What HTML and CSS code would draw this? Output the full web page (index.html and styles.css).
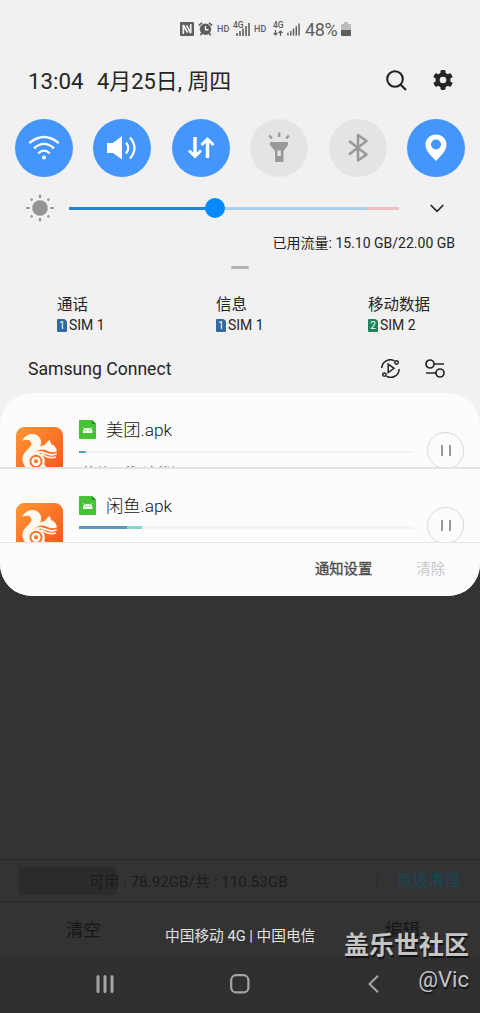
FILE: index.html
```html
<!DOCTYPE html>
<html lang="zh-CN">
<head>
<meta charset="utf-8">
<title>通知面板</title>
<link rel="stylesheet" href="styles.css">
</head>
<body>
<svg class="defs" width="0" height="0">
  <defs>
    <linearGradient id="orange" x1="0" y1="0" x2="1" y2="1"><stop offset="0" stop-color="#ff9636"/><stop offset="1" stop-color="#fc5418"/></linearGradient>
    <symbol id="uc" viewBox="48 110 141 141">
      <rect x="48" y="110" width="141" height="141" rx="25" fill="url(#orange)"/>
      <path fill="#fff8ee" d="M67 151C75 133 96 126 110 134C126 143 127 160 117 174C109 185 96 190 91 202C86 216 91 230 104 236L82 236C70 224 64 209 69 196C74 182 91 174 94 162C96 150 83 144 67 151Z"/>
      <path fill="#fff8ee" d="M149 148L154 162C164 165 170 174 171 183C162 188 148 186 138 180C127 174 114 178 101 187C109 174 122 165 134 164C138 158 143 153 149 148Z"/>
      <path fill="none" stroke="#fff8ee" stroke-width="5" d="M102 190C122 178 134 190 150 193Q162 195 170 190M124 190C136 199 153 205 168 200"/>
      <circle cx="108" cy="213" r="23" fill="#fb702a" stroke="#fff8ee" stroke-width="7"/>
      <circle cx="108" cy="213" r="10" fill="none" stroke="#fff8ee" stroke-width="8"/>
      <path stroke="#fff8ee" stroke-width="7" d="M128 222L139 236"/>
    </symbol>
    <symbol id="apk" viewBox="0 0 17 19">
      <path fill="#45c236" d="M1 0H13L17 4V18Q17 19 16 19H1Q0 19 0 18V1Q0 0 1 0Z"/><path fill="#238a29" d="M13 0L17 4H13Z"/>
      <path fill="#f4fff0" d="M4 13V11Q4.5 8 8.7 8T13.4 11V13Z"/><path stroke="#f4fff0" stroke-width=".8" d="M4 7L6 9.3M13.4 7L11.4 9.3"/><path stroke="#45b53a" stroke-width="1.2" d="M6.3 10.5H7.5M10 10.5H11.2"/>
    </symbol>
    <symbol id="signal" viewBox="0 0 14 13"><path stroke="#5e5e5e" stroke-width="1.6" d="M1 10V13M4 8V13M7 5.5V13M10 3V13M13 0V13"/></symbol>
  </defs>
</svg>
<main class="screen">
  <section class="panel">
    <header class="status">
      <svg width="14" height="14" viewBox="0 0 14 14"><rect width="14" height="14" rx="1" fill="#5e5e5e"/><path fill="none" stroke="#f1f1f1" stroke-width="1.7" d="M3.3 12V3L7.5 10.7M6.5 3.3L10.7 11V2"/></svg>
      <svg class="alarm" width="15" height="14" viewBox="0 0 15 14"><circle cx="7.5" cy="7.3" r="5.7" fill="#5e5e5e"/><path fill="none" stroke="#5e5e5e" stroke-width="1.7" d="M.8 3.3L4 .8M14.2 3.3L11 .8M4 11L2.3 13.3M11 11L12.7 13.3"/><path fill="none" stroke="#f1f1f1" stroke-width="1.4" d="M7.5 4V7.8H10.5"/></svg>
      <span class="hd">HD</span>
      <span class="network net-one"><b>4G</b><svg width="14" height="13"><use href="#signal"/></svg></span>
      <span class="hd">HD</span>
      <span class="network net-two"><b>4G</b><svg class="arrows" width="10" height="6" viewBox="0 0 10 6"><path fill="none" stroke="#5e5e5e" stroke-width="1.2" d="M2.5 0V5M.6 3L2.5 5L4.4 3M7.5 6V1M5.6 3L7.5 1L9.4 3"/></svg><svg width="13" height="13"><use href="#signal"/></svg></span>
      <span class="percent">48%</span>
      <svg class="battery" width="10" height="14" viewBox="0 0 10 14"><path fill="#bcbcbc" d="M3 0H7V2H9Q10 2 10 3V8H0V3Q0 2 1 2H3Z"/><path fill="#5e5e5e" d="M0 8H10V13Q10 14 9 14H1Q0 14 0 13Z"/></svg>
    </header>

    <div class="clock-row">
      <span class="time">13:04</span><span class="date">4月25日, 周四</span>
      <svg class="search" width="21" height="21" viewBox="0 0 21 21"><circle cx="9" cy="9" r="7.8" fill="none" stroke="#222" stroke-width="2.1"/><path stroke="#222" stroke-width="2.2" d="M14.5 14.5L20 20"/></svg>
      <svg class="gear" width="20" height="20" viewBox="0 0 20 20"><g fill="#252525"><circle cx="10" cy="10" r="7.5"/><rect x="7.5" y="0" width="5" height="20" rx="1.4"/><rect x="7.5" y="0" width="5" height="20" rx="1.4" transform="rotate(60 10 10)"/><rect x="7.5" y="0" width="5" height="20" rx="1.4" transform="rotate(120 10 10)"/></g><circle cx="10" cy="10" r="3.3" fill="#f1f1f1"/></svg>
    </div>

    <nav class="toggles">
      <span class="toggle on"><svg viewBox="0 0 58 58"><g fill="none" stroke="#fff" stroke-width="2.3"><path d="M14.3 24Q29 12 43.7 24M19 29.3Q29 20.5 39 29.3M23.3 34.3Q29 29 34.7 34.3"/></g><circle cx="29" cy="38.5" r="2" fill="#fff"/></svg></span>
      <span class="toggle on"><svg viewBox="0 0 58 58"><path fill="#fff" d="M14 24H20L29 17V40.5L20 34H14Z"/><path fill="none" stroke="#fff" stroke-width="2.2" d="M33 23.5Q37.5 29 33 34.5M37 18.5Q46 29 37 39.5"/></svg></span>
      <span class="toggle on"><svg viewBox="0 0 58 58"><path fill="none" stroke="#fff" stroke-width="3.5" d="M23 18V37M35.5 39V21"/><path fill="none" stroke="#fff" stroke-width="3" d="M17 31.5L23 37.5L29 31.5M29.5 26L35.5 20L41.5 26"/></svg></span>
      <span class="toggle"><svg viewBox="0 0 58 58"><path fill="#999" fill-rule="evenodd" d="M20 23H38V26L33.5 32V42Q33.5 43 32.5 43H26Q25 43 25 42V32L20 26ZM27.5 31.5V37H30.8V31.5Z"/><path stroke="#999" stroke-width="2.3" d="M19.2 16.5L22 19.5M29.2 13.5V18M39 16.5L36 19.5"/></svg></span>
      <span class="toggle"><svg viewBox="0 0 58 58"><path fill="none" stroke="#999" stroke-width="2.5" stroke-linejoin="round" d="M20 22L37.5 35.5L29 41.5V16L37.5 22L20 35.5"/></svg></span>
      <span class="toggle on"><svg viewBox="0 0 58 58"><path fill="#fff" fill-rule="evenodd" d="M29 15.5C22.8 15.5 18.5 20 18.5 25.5C18.5 32 24 36.5 29 42C34 36.5 39.5 32 39.5 25.5C39.5 20 35.2 15.5 29 15.5ZM29 20.5A5 5 0 1 0 29 30.5A5 5 0 1 0 29 20.5Z"/></svg></span>
    </nav>

    <div class="brightness">
      <svg width="28" height="28" viewBox="0 0 28 28"><circle cx="14" cy="14" r="7.8" fill="#949494"/><path stroke="#999" stroke-width="2.2" d="M14 .5V4M14 24V27.5M.3 14H3.8M24.2 14H27.7M4.8 4.8L6.5 6.5M21.5 21.5L23.2 23.2M4.8 23.2L6.5 21.5M21.5 6.5L23.2 4.8"/></svg>
      <div class="slider"><i class="level"></i><i class="rest"></i><i class="hot"></i><b class="thumb"></b></div>
      <svg class="chevron" width="14" height="9" viewBox="0 0 14 9"><path fill="none" stroke="#252525" stroke-width="1.7" d="M.7 1L7 7.3L13.3 1"/></svg>
    </div>
    <div class="usage">已用流量: 15.10 GB/22.00 GB</div>
    <div class="handle"></div>

    <div class="sims">
      <div class="sim"><span>通话</span><small><i>1</i>SIM 1</small></div>
      <div class="sim"><span>信息</span><small><i>1</i>SIM 1</small></div>
      <div class="sim"><span>移动数据</span><small><i class="green">2</i>SIM 2</small></div>
    </div>

    <div class="connect">
      <span>Samsung Connect</span>
      <svg class="media" width="19" height="19" viewBox="0 0 19 19"><g fill="none" stroke="#252525" stroke-width="1.5"><path d="M.8 9A8.6 8.6 0 0 1 13.5 1.8M18.2 10A8.6 8.6 0 0 1 5.3 17.2M7.2 5.2L13 9.3L7.2 13.5Z"/><circle cx="15.5" cy="3.5" r="1.7"/><circle cx="3.4" cy="15.6" r="1.7"/></g></svg>
      <svg width="20" height="19" viewBox="0 0 20 19"><g fill="none" stroke="#252525" stroke-width="1.7"><circle cx="5" cy="5" r="4"/><path d="M9 5H19M1 14H11"/><circle cx="15" cy="14" r="4"/></g></svg>
    </div>

    <section class="card">
      <article class="download first">
        <svg class="app" width="47" height="47"><use href="#uc"/></svg>
        <div class="info">
          <div class="name"><svg width="17" height="19"><use href="#apk"/></svg><span>美团.apk</span></div>
          <div class="progress"><i style="width:6px"></i><b style="width:2px"></b></div>
          <div class="detail">等待下载, 请稍候...</div>
        </div>
        <span class="pause"></span>
      </article>
      <article class="download">
        <svg class="app" width="47" height="47"><use href="#uc"/></svg>
        <div class="info">
          <div class="name"><svg width="17" height="19"><use href="#apk"/></svg><span>闲鱼.apk</span></div>
          <div class="progress"><i style="width:48px"></i><b style="width:15px"></b></div>
        </div>
        <span class="pause"></span>
      </article>
      <footer class="actions"><span>通知设置</span><span class="clear">清除</span></footer>
    </section>
  </section>

  <section class="storage"><span class="used"></span><span class="space">可用 : 78.92GB/共 : 110.53GB</span><span class="clean">垃圾清理</span></section>
  <section class="bottom"><span class="empty">清空</span><span class="carrier">中国移动 4G | 中国电信</span><span class="edit">编辑</span></section>
  <nav class="navigation">
    <svg width="18" height="18" viewBox="0 0 18 18"><path stroke="#a5a5a5" stroke-width="3" stroke-linecap="round" d="M2 1.5V16.5M9 1.5V16.5M16 1.5V16.5"/></svg>
    <svg width="20" height="20" viewBox="0 0 20 20"><rect x="1.2" y="1.2" width="17.2" height="17.2" rx="5" fill="none" stroke="#a5a5a5" stroke-width="2.2"/></svg>
    <svg width="11" height="18" viewBox="0 0 11 18"><path fill="none" stroke="#a5a5a5" stroke-width="2" d="M10 .7L1.5 9L10 17.3"/></svg>
  </nav>
  <div class="watermark"><strong>盖乐世社区</strong><span>@Vic</span></div>
</main>
</body>
</html>
```
FILE: styles.css
```css
* { box-sizing: border-box; }
body { margin: 0; font-family: Roboto, "Noto Sans CJK SC", sans-serif; color: #252525; }
i, b { font-style: normal; display: block; }
svg { display: block; flex: none; }
span, small { white-space: nowrap; }
.defs { position: absolute; }
.screen { position: relative; width: 480px; height: 1013px; overflow: hidden; background: #333; display: flex; flex-direction: column; }
.panel { height: 596px; flex: none; background: #f1f1f1; border-radius: 0 0 32px 32px; display: flex; flex-direction: column; }
.status { height: 58px; padding-left: 180px; display: flex; align-items: center; color: #5e5e5e; }
.alarm { margin-left: 4px; }
.hd { font-size: 9px; font-weight: 500; margin-left: 4px; width: 12px; }
.network { position: relative; width: 17px; height: 14px; margin-left: 4px; display: flex; align-items: flex-end; justify-content: flex-end; }
.network b { position: absolute; left: 0; top: -1px; font-size: 8.5px; line-height: 9px; font-weight: 500; }
.network.net-two { width: 27px; margin-left: 7px; }
.arrows { position: absolute; left: 0; bottom: 0; }
.percent { font-size: 18px; margin-left: 5px; width: 33px; letter-spacing: -.4px; }
.battery { margin-left: 3px; }
.clock-row { height: 46px; padding: 0 27px 0 28px; display: flex; align-items: center; font-size: 22.3px; }
.time { width: 69px; }
.date { font-size: 21.9px; line-height: 30px; padding-top: 1px; }
.search { margin-left: auto; margin-top: -2px; }
.gear { margin-left: 26px; margin-top: -2px; }
.toggles { margin-top: 15px; height: 58px; padding: 0 15px; display: flex; justify-content: space-between; }
.toggle { width: 58px; height: 58px; border-radius: 50%; background: #e4e4e4; }
.toggle.on { background: #4496fc; }
.brightness { height: 62px; padding: 0 36px 0 26px; display: flex; align-items: center; }
.slider { position: relative; width: 330px; height: 3px; margin-left: 15px; display: flex; }
.level { width: 146px; background: #2585d2; }
.rest { width: 152px; background: #a9cfee; }
.hot { width: 32px; background: #efbfc1; }
.thumb { position: absolute; left: 136px; top: -9px; width: 20px; height: 20px; border-radius: 50%; background: #0589fd; }
.chevron { margin-left: auto; }
.usage { height: 20px; margin-top: -6px; padding-right: 25px; line-height: 20px; font-size: 14px; text-align: right; }
.handle { width: 18px; height: 3px; border-radius: 2px; background: #b1b1b1; margin: 13px auto 0 231px; }
.sims { height: 40px; margin-top: 26px; padding-left: 57px; display: grid; grid-template-columns: 159px 152px 1fr; }
.sim { display: flex; flex-direction: column; font-size: 15.5px; line-height: 20px; }
.sim small { display: flex; align-items: center; gap: 2px; font-size: 14px; }
.sim i { width: 10px; height: 13px; border-radius: 1px 4px 1px 1px; background: #3469a0; color: #fff; font-size: 10px; line-height: 13px; text-align: center; }
.sim .green { background: #1d855c; }
.connect { height: 49px; margin-top: 9px; padding: 0 35px 0 28px; display: flex; align-items: center; font-size: 17.6px; }
.connect span { padding-top: 1px; }
.media { margin-left: auto; margin-right: 25px; }
.card { height: 203px; margin-top: auto; flex: none; border-radius: 32px; background: #fcfcfc; display: flex; flex-direction: column; overflow: hidden; }
.download { height: 74px; flex: none; padding: 34px 16px 0; border-bottom: 1px solid #e3e3e3; display: flex; overflow: hidden; }
.download.first { height: 76px; border-bottom-width: 2px; }
.info { margin-left: 16px; width: 335px; margin-top: -11px; }
.name { display: flex; align-items: center; height: 26px; font-size: 17.3px; font-weight: 300; color: #151515; gap: 10px; }
.name span { line-height: 24px; padding-top: 2px; }
.progress { height: 3px; margin-top: 8px; display: flex; background: #f3f3f3; }
.progress i { background: #5b96bd; }
.progress b { background: #81d8cc; }
.first .progress { height: 2px; margin-top: 9px; }
.detail { margin: 13px 0 0 4px; font-size: 13.5px; line-height: 14px; }
.pause { width: 37px; height: 37px; flex: none; border: 1px solid #d8d8d8; border-radius: 50%; margin: 5px 0 0 auto; display: flex; justify-content: center; align-items: center; gap: 6px; }
.download:not(.first) .pause { margin-top: 4px; }
.pause::before, .pause::after { content: ""; width: 2px; height: 11px; background: #999; }
.actions { height: 53px; padding: 0 35px 4px 315px; display: flex; justify-content: space-between; align-items: center; font-size: 14.3px; color: #4b4b4b; -webkit-text-stroke: .35px #4b4b4b; }
.clear { color: #c7c7c7; -webkit-text-stroke: 0; }
.storage { height: 43px; margin-top: 263px; flex: none; border-top: 1px solid #292929; border-bottom: 1px solid #292929; display: flex; align-items: center; color: #1b1b1b; font-size: 15.2px; }
.used { width: 97px; height: 28px; margin-left: 19px; background: #2b2b2b; }
.space { margin-left: -27px; padding-bottom: 2px; }
.clean { margin: 0 20px 0 auto; padding-left: 19px; border-left: 1px solid #292929; line-height: 16px; font-size: 15.8px; color: #18465a; }
.bottom { height: 56px; flex: none; display: grid; grid-template-columns: 99px 220px 1fr; padding: 0 0 3px 66px; align-items: center; color: #151515; font-size: 17.5px; }
.carrier { color: #e2e2e2; font-size: 14.7px; padding-top: 11px; }
.navigation { height: 55px; flex: none; background: #303030; display: grid; grid-template-columns: 134px 138px 1fr; align-items: center; padding: 0 0 4px 96px; }
.watermark { position: absolute; right: 11px; top: 929px; color: #c5c5c5; display: flex; flex-direction: column; align-items: flex-end; text-shadow: 1px 2px 1px #111; }
.watermark strong { font-size: 25px; line-height: 34px; font-weight: 700; }
.watermark span { font-size: 22px; line-height: 34px; }
```
